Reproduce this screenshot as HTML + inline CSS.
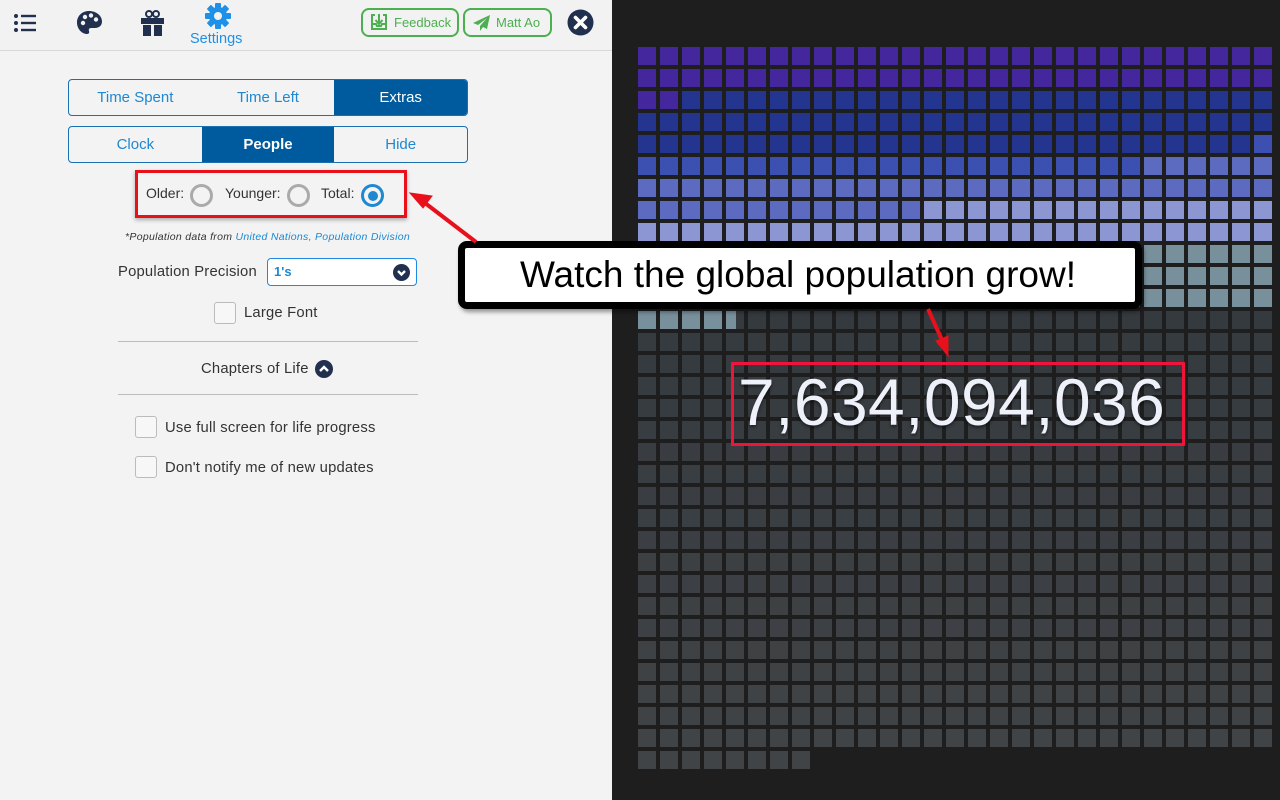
<!DOCTYPE html>
<html><head><meta charset="utf-8"><style>
*{box-sizing:border-box;margin:0;padding:0}
body{width:1280px;height:800px;overflow:hidden;font-family:"Liberation Sans",Arial,sans-serif;background:#1e1e1e;position:relative}
#left{position:absolute;left:0;top:0;width:612px;height:800px;background:#f3f3f3}
#hdr{position:absolute;left:0;top:0;width:612px;height:51px;background:#f2f2f2;border-bottom:1px solid #d8d8d8}
.abs{position:absolute}
.seg{position:absolute;left:68px;width:400px;height:37px;border:1px solid #1a6fb0;border-radius:4px;display:flex;overflow:hidden}
.seg div{flex:1;text-align:center;line-height:35px;font-size:15px;color:#1e88d0}
.seg div.on{background:#005a9e;color:#fff}
.radio{position:absolute;width:23px;height:23px;border-radius:50%;border:3px solid #aaa;top:184px}
.cb{position:absolute;width:22px;height:22px;border:1px solid #bbb;border-radius:3px;background:#f7f7f7}
.txt{position:absolute;font-size:14px;color:#333;white-space:nowrap}
.t15{font-size:14.8px;letter-spacing:0.2px}
#grid{position:absolute;left:0;top:0}
.c{position:absolute;width:18px;height:18px}
</style></head><body>
<div id="left">
<div id="hdr">
<svg class="abs" style="left:13px;top:13px" width="24" height="20" viewBox="0 0 24 20" fill="#22304f"><circle cx="3" cy="3" r="2"/><circle cx="3" cy="10" r="2"/><circle cx="3" cy="17" r="2"/><rect x="8" y="1.8" width="15" height="2.4"/><rect x="8" y="8.8" width="15" height="2.4"/><rect x="8" y="15.8" width="15" height="2.4"/></svg>
<svg class="abs" style="left:76px;top:10px" width="27" height="25" viewBox="0 0 27 25"><path d="M13 1C6 1 1 6 1 12.5 1 19 6 24 11 24c2 0 2.5-1.5 2-3-.6-1.5.2-3 2-3h4c4 0 7-2.5 7-6.5C26 5.5 20 1 13 1z" fill="#22304f"/><circle cx="7" cy="13" r="2.2" fill="#f2f2f2"/><circle cx="9" cy="7" r="2.2" fill="#f2f2f2"/><circle cx="15" cy="5.5" r="2.2" fill="#f2f2f2"/><circle cx="20" cy="9.5" r="2.2" fill="#f2f2f2"/></svg>
<svg class="abs" style="left:141px;top:10px" width="23" height="26" viewBox="0 0 23 26" fill="#22304f"><circle cx="8" cy="4" r="3" fill="none" stroke="#22304f" stroke-width="2"/><circle cx="15" cy="4" r="3" fill="none" stroke="#22304f" stroke-width="2"/><rect x="0" y="8" width="23" height="6"/><rect x="2" y="15" width="8" height="11"/><rect x="13" y="15" width="8" height="11"/></svg>
<svg class="abs" style="left:204px;top:2px" width="28" height="28" viewBox="0 0 28 28"><g fill="#1e90e8"><circle cx="14" cy="14" r="9"/><g id="t"><rect x="11" y="1" width="6" height="6" rx="1"/><rect x="11" y="21" width="6" height="6" rx="1"/></g><use href="#t" transform="rotate(45 14 14)"/><use href="#t" transform="rotate(90 14 14)"/><use href="#t" transform="rotate(135 14 14)"/></g><circle cx="14" cy="14" r="4" fill="#f2f2f2"/></svg>
<div class="abs" style="left:190px;top:31px;font-size:14.5px;color:#1e90e8">Settings</div>
<div class="abs" style="left:361px;top:8px;width:98px;height:29px;border:2px solid #4caf50;border-radius:8px;color:#4caf50;font-size:13px;line-height:25px;padding-left:31px">Feedback
<svg class="abs" style="left:7px;top:3px" width="18" height="18" viewBox="0 0 18 18" fill="none" stroke="#4caf50" stroke-width="2"><path d="M5 2H2v14h14V2h-3"/><path d="M9 1v9M5.5 7 9 11l3.5-4"/><path d="M2 11h4l1 2h4l1-2h4" /></svg></div>
<div class="abs" style="left:463px;top:8px;width:89px;height:29px;border:2px solid #4caf50;border-radius:8px;color:#4caf50;font-size:13px;line-height:25px;padding-left:31px">Matt Ao
<svg class="abs" style="left:7px;top:4px" width="19" height="18" viewBox="0 0 19 18" fill="#4caf50"><path d="M18 1 1 9l5 2 9-7-7 8v5l3-4 4 2z"/></svg></div>
<svg class="abs" style="left:567px;top:9px" width="27" height="27" viewBox="0 0 27 27"><circle cx="13.5" cy="13.5" r="13" fill="#22304f"/><path d="M8.5 8.5l10 10M18.5 8.5l-10 10" stroke="#fff" stroke-width="3.6" stroke-linecap="round"/></svg>
</div>
<div class="seg" style="top:79px"><div>Time Spent</div><div>Time Left</div><div class="on">Extras</div></div>
<div class="seg" style="top:126px"><div>Clock</div><div class="on" style="font-weight:bold">People</div><div>Hide</div></div>
<div class="abs" style="left:135px;top:170px;width:272px;height:48px;border:3px solid #e8101a;box-shadow:0 2px 4px rgba(0,0,0,.3)"></div>
<div class="txt" style="left:146px;top:185px">Older:</div>
<div class="radio" style="left:190px"></div>
<div class="txt" style="left:225px;top:185px">Younger:</div>
<div class="radio" style="left:287px"></div>
<div class="txt" style="left:321px;top:185px">Total:</div>
<div class="radio" style="left:361px;border-color:#1e88d0"><div style="position:absolute;left:3.5px;top:3.5px;width:10px;height:10px;border-radius:50%;background:#1e88d0"></div></div>
<div class="abs" style="left:125px;top:231px;font-size:10.5px;letter-spacing:0.3px;font-style:italic;color:#333;white-space:nowrap">*Population data from <span style="color:#1e88d0">United Nations, Population Division</span></div>
<div class="txt t15" style="left:118px;top:264px">Population Precision</div>
<div class="abs" style="left:267px;top:258px;width:150px;height:28px;border:1px solid #1e88e5;border-radius:4px;background:#fff;font-size:13px;font-weight:bold;color:#1e88d0;line-height:26px;padding-left:6px">1's
<svg class="abs" style="left:125px;top:5px" width="17" height="17" viewBox="0 0 17 17"><circle cx="8.5" cy="8.5" r="8.5" fill="#22304f"/><path d="M5 7l3.5 3.5L12 7" stroke="#fff" stroke-width="2.4" fill="none"/></svg></div>
<div class="cb" style="left:214px;top:302px"></div>
<div class="txt t15" style="left:244px;top:305px">Large Font</div>
<div class="abs" style="left:118px;top:341px;width:300px;height:1px;background:#bbb"></div>
<div class="txt t15" style="left:201px;top:361px">Chapters of Life</div>
<svg class="abs" style="left:315px;top:360px" width="18" height="18" viewBox="0 0 18 18"><circle cx="9" cy="9" r="9" fill="#22304f"/><path d="M5 11l4-4 4 4" stroke="#fff" stroke-width="2.4" fill="none"/></svg>
<div class="abs" style="left:118px;top:394px;width:300px;height:1px;background:#bbb"></div>
<div class="cb" style="left:135px;top:416px"></div>
<div class="txt t15" style="left:165px;top:420px">Use full screen for life progress</div>
<div class="cb" style="left:135px;top:456px"></div>
<div class="txt t15" style="left:165px;top:460px">Don't notify me of new updates</div>
</div>
<div id="grid"></div>
<div class="abs" style="left:731px;top:362px;width:454px;height:84px;border:3px solid #f0143c"></div>
<div class="abs" style="left:738px;top:364px;font-size:66px;color:#eef0fa;letter-spacing:0.4px;text-shadow:0 2px 3px rgba(0,0,0,.5)">7,634,094,036</div>
<div class="abs" style="left:458px;top:241px;width:684px;height:68px;border:7px solid #000;border-radius:9px;background:#fff;box-shadow:2px 3px 4px rgba(0,0,0,.4);text-align:center;font-size:37px;line-height:53px;color:#000;padding-right:4px">Watch the global population grow!</div>
<svg class="abs" style="left:0;top:0" width="1280" height="800" viewBox="0 0 1280 800"><g stroke="#e8101a" stroke-width="4" fill="#e8101a"><line x1="476" y1="242" x2="425" y2="203"/><path d="M410 193l22 3-9 12z" stroke-width="1"/><line x1="928" y1="309" x2="942" y2="340"/><path d="M948 356l-12-15 12-5z" stroke-width="1"/></g></svg>
<script>
var g=document.getElementById('grid'),h='';
function col(r,c){
 if(r<2||(r==2&&c<2))return'#44279c';
 if(r<4||(r==4&&c<28))return'#243590';
 if(r==4||(r==5&&c<23))return'#3b50b0';
 if(r==5||r==6||(r==7&&c<13))return'#5c6bc0';
 if(r<=8)return'#8c96d2';
 if(r<=11||(r==12&&c<4))return'#78909c';
 var t=(r-12)/20,a=Math.round(53+t*12),b=Math.round(58+t*10),d=Math.round(63+t*8);
 return'rgb('+a+','+b+','+d+')';}
for(var r=0;r<33;r++)for(var c=0;c<29;c++){if(r==32&&c>7)continue;
 var bg=col(r,c),w=18;
 if(r==12&&c==4){h+='<div class="c" style="left:'+(638+c*22)+'px;top:'+(47+r*22)+'px;background:#353a3f"></div>';bg='#78909c';w=10;}
 h+='<div class="c" style="left:'+(638+c*22)+'px;top:'+(47+r*22)+'px;width:'+w+'px;background:'+bg+'"></div>';}
g.innerHTML=h;
</script>
</body></html>
